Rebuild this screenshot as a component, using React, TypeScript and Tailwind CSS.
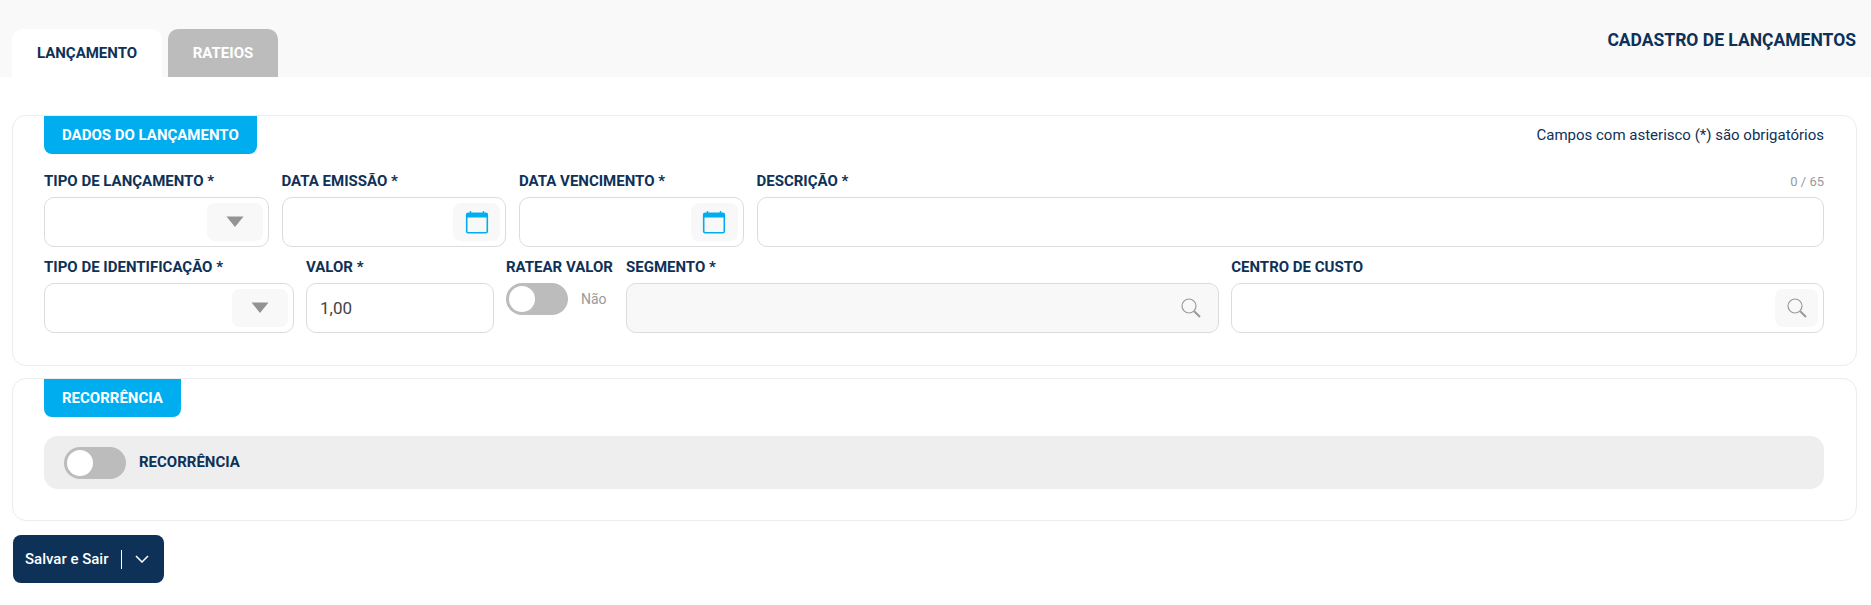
import { ReactNode } from 'react';

const labelClass = 'block h-[27px] text-[15px] leading-[22px] font-bold whitespace-nowrap text-[#0e3157]';
const boxClass = 'flex h-[50px] items-center justify-end rounded-[10px] border border-[#dcdcdc] pr-[5px]';
const badgeClass = 'inline-block rounded-b-[8px] bg-[#00adef] px-[18px] text-[15px] leading-[38px] font-bold text-white';

function CaretIcon() {
  return (
    <svg className="-mt-[2px]" width="18" height="11" viewBox="0 0 18 11" fill="#939393">
      <path d="M0.5 0.5h17L9 11z" />
    </svg>
  );
}

function CalendarIcon() {
  return (
    <svg width="24" height="24" viewBox="0 0 24 24" fill="none">
      <rect x="1.7" y="3.2" width="20.6" height="19.6" rx="1.5" stroke="#00adef" strokeWidth="1.6" />
      <path d="M1.5 3.5h21V7.5H1.5z" fill="#00adef" />
      <path d="M5.5 1v3M18.5 1v3" stroke="#00adef" strokeWidth="1.4" />
    </svg>
  );
}

function SearchIcon() {
  return (
    <svg width="20" height="20" viewBox="0 0 20 20" fill="none" stroke="#9a9a9a" strokeWidth="1.2">
      <circle cx="8" cy="8" r="7" />
      <path d="M13.2 13.2L19 19" strokeWidth="2" />
    </svg>
  );
}

function IconButton({ className, children }: { className: string; children: ReactNode }) {
  return (
    <span className={`flex h-[38px] items-center justify-center rounded-[8px] bg-[#f8f8f8] ${className}`}>
      {children}
    </span>
  );
}

function Switch() {
  return (
    <span className="flex h-[32px] w-[62px] shrink-0 items-center rounded-full bg-[#bcbcbc] pl-[3px]">
      <span className="h-[26px] w-[26px] rounded-full bg-white" />
    </span>
  );
}

function Field({ label, className, disabled, children }: { label: string; className: string; disabled?: boolean; children?: ReactNode }) {
  return (
    <div className={className}>
      <label className={labelClass}>{label}</label>
      <div className={`${boxClass} ${disabled ? 'bg-[#f8f8f8]' : 'bg-white'}`}>{children}</div>
    </div>
  );
}

export default function App() {
  return (
    <div className="min-h-[605px] bg-white font-['Roboto',sans-serif]">
      <div className="flex h-[77px] items-start justify-between bg-[#f9f9f9] pr-[15px] pl-3">
        <div className="flex gap-[6px] pt-[29px]">
          <div className="flex h-[48px] w-[150px] items-center justify-center rounded-t-[10px] bg-white text-[15px] font-bold text-[#0e3157]">
            LANÇAMENTO
          </div>
          <div className="flex h-[48px] w-[110px] items-center justify-center rounded-t-[10px] bg-[#bcbcbc] text-[15px] font-bold text-white">
            RATEIOS
          </div>
        </div>
        <h1 className="pt-[29px] text-[17.5px] leading-[22px] font-bold text-[#0e3157]">CADASTRO DE LANÇAMENTOS</h1>
      </div>

      <div className="pt-[38px] pr-[14px] pl-3">
        <section className="h-[251px] rounded-[14px] border border-[#ececec] pr-[32px] pl-[31px]">
          <div className="flex items-start justify-between">
            <span className={badgeClass}>DADOS DO LANÇAMENTO</span>
            <span className="text-[15px] leading-[38px] text-[#0e3157]">Campos com asterisco (*) são obrigatórios</span>
          </div>
          <div className="mt-[16px] flex gap-[13px]">
            <Field label="TIPO DE LANÇAMENTO *" className="w-[224.5px]">
              <IconButton className="w-[56px]"><CaretIcon /></IconButton>
            </Field>
            <Field label="DATA EMISSÃO *" className="w-[224.5px]">
              <IconButton className="w-[47px]"><CalendarIcon /></IconButton>
            </Field>
            <Field label="DATA VENCIMENTO *" className="w-[224.5px]">
              <IconButton className="w-[47px]"><CalendarIcon /></IconButton>
            </Field>
            <div className="flex-1">
              <div className="flex justify-between">
                <label className={labelClass}>DESCRIÇÃO *</label>
                <span className="text-[13px] leading-[24px] text-[#9a9a9a]">0 / 65</span>
              </div>
              <div className={`${boxClass} bg-white`} />
            </div>
          </div>
          <div className="mt-[9px] flex gap-[12.5px]">
            <Field label="TIPO DE IDENTIFICAÇÃO *" className="w-[249.5px]">
              <IconButton className="w-[56px]"><CaretIcon /></IconButton>
            </Field>
            <div className="w-[187.5px]">
              <label className={labelClass}>VALOR *</label>
              <div className="flex h-[50px] items-center rounded-[10px] border border-[#dcdcdc] pt-[2px] pl-[13px] text-[17px] text-[#444]">1,00</div>
            </div>
            <div className="w-[107.5px]">
              <label className={labelClass}>RATEAR VALOR</label>
              <div className="flex items-center gap-[13px]">
                <Switch />
                <span className="pt-[1px] text-[14px] text-[#9a9a9a]">Não</span>
              </div>
            </div>
            <Field label="SEGMENTO *" className="flex-1" disabled>
              <IconButton className="w-[43px]"><SearchIcon /></IconButton>
            </Field>
            <Field label="CENTRO DE CUSTO" className="flex-1">
              <IconButton className="w-[43px]"><SearchIcon /></IconButton>
            </Field>
          </div>
        </section>

        <section className="mt-[12px] h-[143px] rounded-[14px] border border-[#ececec] pr-[32px] pl-[31px]">
          <span className={badgeClass}>RECORRÊNCIA</span>
          <div className="mt-[19px] flex h-[53px] items-center gap-[13px] rounded-[14px] bg-[#eeeeee] pl-[20px]">
            <Switch />
            <span className="text-[15px] font-bold text-[#0e3157]">RECORRÊNCIA</span>
          </div>
        </section>

        <button className="mt-[14px] ml-px flex h-[48px] w-[151px] items-center rounded-[8px] bg-[#0e3157] pl-[12px] text-[15px] font-medium text-white">
          Salvar e Sair
          <span className="ml-[12px] h-[19px] w-px bg-white" />
          <svg className="ml-[13px]" width="14" height="8" viewBox="0 0 14 8" fill="none" stroke="white" strokeWidth="1.5">
            <path d="M1 1l6 6 6-6" />
          </svg>
        </button>
      </div>
    </div>
  );
}
